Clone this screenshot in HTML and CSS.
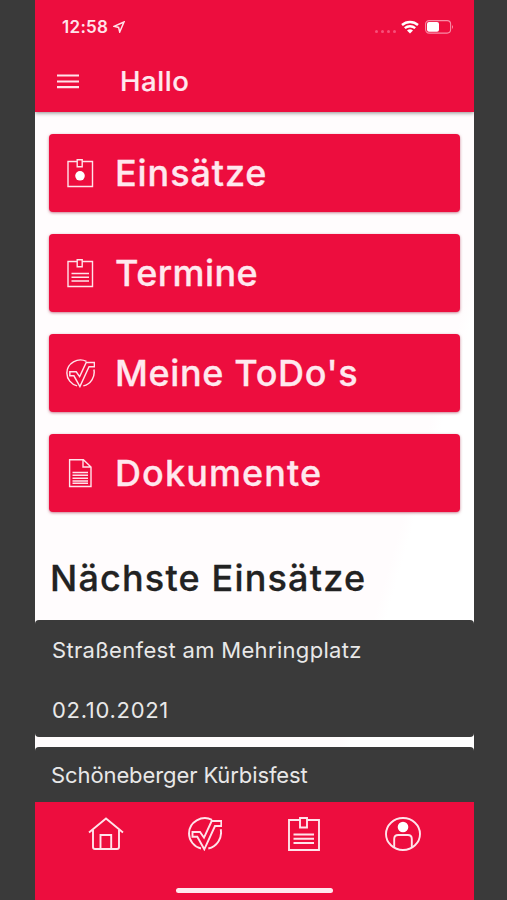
FILE: index.html
```html
<!DOCTYPE html>
<html lang="de">
<head>
<meta charset="utf-8">
<title>Hallo</title>
<link rel="stylesheet" href="styles.css">
</head>
<body>
<svg class="defs" width="0" height="0">
  <symbol id="clipboard" viewBox="0 0 32 34">
    <path d="M11.500 3H1v30h30V3H19.500M12 1h7v9.500h-7z"/>
    <path d="M5.500 17.500h20.500M5.500 21.700h20.500M5.500 26h20.500"/>
  </symbol>
  <symbol id="check" viewBox="0 0 34 34">
    <path d="M24 2.800C14-2.200 1 4.800 1 16.500 1 23.500 6 29.800 13 31.500M32.700 12.300C34.500 21 29 29.500 20.300 31.500"/>
    <path d="M4.500 15H12l4 5.700L23.700 4h9.600v5H27L16.300 32.300 9.300 19.700H4.500z"/>
  </symbol>
</svg>
<div class="phone">
  <header class="header">
    <div class="status">
      <span class="time">12:58</span>
      <svg class="locate" viewBox="0 0 12 12"><path d="M11 1 1 5.300l4.600 1.100L6.700 11z"/></svg>
      <span class="dots"><i></i><i></i><i></i><i></i></span>
      <svg class="wifi" viewBox="0 0 18 14"><path d="M1 5A12 12 0 0 1 17 5M3.800 8.200a8 8 0 0 1 10.400 0"/><path class="solid" d="M6 10.500a4.800 4.800 0 0 1 6 0L9 13.500z"/></svg>
      <svg class="battery" viewBox="0 0 29 14"><rect class="shell" x=".6" y=".6" width="25" height="12.500" rx="3.500"/><rect class="solid" x="2" y="2" width="12" height="9.800" rx="2"/><path class="solid tip" d="M27 5q2 1.700 0 4z"/></svg>
    </div>
    <div class="bar">
      <svg class="menu" viewBox="0 0 22 15"><path d="M0 1.500h22M0 7.500h22M0 13.200h22"/></svg>
      <h1>Hallo</h1>
    </div>
  </header>
  <main class="content">
    <nav class="actions">
      <a class="action"><svg class="icon" viewBox="0 0 27 29"><path d="M10 2.500H1v25h24.500v-25H15.500M10.200.700h5v7.100h-5z"/><circle class="solid" cx="13" cy="16.800" r="4.800"/></svg><span class="t1">Einsätze</span></a>
      <a class="action"><svg class="icon" viewBox="0 0 27 29"><path d="M10 2.500H1v25h24.500v-25H15.500M10.200.700h5v7.100h-5z"/><path d="M4.500 14.500H22M4.500 18.300H22M4.500 22H22"/></svg><span class="t2">Termine</span></a>
      <a class="action"><svg class="icon round"><use href="#check"/></svg><span class="t3">Meine ToDo's</span></a>
      <a class="action"><svg class="icon" viewBox="0 0 27 29"><path d="M2.600.700h13.800L24 8v19.500H2.600zM16 .700V8h8"/><path d="M5.500 13.500H21M5.500 16.300H21M5.500 19.200H21M5.500 22H21M5.500 24.300H21"/></svg><span class="t4">Dokumente</span></a>
    </nav>
    <h2>Nächste Einsätze</h2>
    <section class="cards">
      <article class="card"><p class="c1">Straßenfest am Mehringplatz</p><p class="c2">02.10.2021</p></article>
      <article class="card"><p class="c3">Schöneberger Kürbisfest</p></article>
    </section>
  </main>
  <footer class="footer">
    <nav class="tabs">
      <svg viewBox="0 0 36 34"><path d="M1 15.500 18 1.500l17 14M5 13v17q0 2 2 2h22q2 0 2-2V13M12.500 32V18h10.700v14"/></svg>
      <svg class="todo"><use href="#check"/></svg>
      <svg><use href="#clipboard"/></svg>
      <svg viewBox="0 0 36 34"><ellipse cx="18" cy="17" rx="17" ry="16"/><circle class="solid" cx="18" cy="10" r="5.300"/><path d="M9.200 30.500V22q0-4 4-4h9.600q4 0 4 4v8.500"/></svg>
    </nav>
    <div class="home"></div>
  </footer>
</div>
</body>
</html>
```
FILE: styles.css
```css
* { box-sizing: border-box; }
body {
  margin: 0;
  background: #3a3a3a;
  font-family: Inter, "Liberation Sans", sans-serif;
}
h1, h2, p { margin: 0; white-space: nowrap; }
svg { display: block; flex: none; fill: none; stroke: #ffe3ea; stroke-width: 1.5; }
.defs { position: absolute; }
.solid { fill: #fff; stroke: none; }
.phone {
  display: flex;
  flex-direction: column;
  width: 439px;
  height: 900px;
  margin-left: 35px;
  overflow: hidden;
  background: #fffcfd;
}
.header {
  flex: none;
  height: 112px;
  background: #ed0d3e;
  box-shadow: 0 1px 4px rgba(0, 0, 0, .45);
  z-index: 1;
}
.status { display: flex; align-items: center; height: 54px; padding-left: 27px; }
.time { width: 47px; color: #ffe3ea; font-size: 17px; font-weight: 600; letter-spacing: .3px; line-height: 54px; }
.locate { width: 12px; height: 12px; margin-left: 4px; }
.dots { display: flex; gap: 3px; margin: 9px 5px 0 250px; }
.dots i { width: 3px; height: 3px; border-radius: 50%; background: #f7507a; }
.wifi { width: 18px; height: 14px; stroke: #fff; stroke-width: 2.4; }
.battery { width: 29px; height: 14px; margin-left: 6px; }
.shell { stroke: #f98ba5; stroke-width: 1.1; }
.tip { fill: #f98ba5; }
.bar { display: flex; align-items: center; height: 54px; padding-left: 22px; }
.menu { width: 22px; height: 15px; stroke-width: 2.2; }
h1 { margin-left: 41px; color: #ffe8ee; font-size: 27.5px; font-weight: 500; letter-spacing: .6px; line-height: 55px; -webkit-text-stroke: .2px; }
.content {
  flex: 1;
  min-height: 0;
  overflow: hidden;
  padding-top: 22px;
  background: linear-gradient(106deg, #fffcfd 0 76%, #fff 78%);
}
.actions { display: grid; gap: 22px; padding: 0 14px; }
.action {
  display: flex;
  align-items: center;
  height: 78px;
  padding-left: 18px;
  border-radius: 4px;
  background: #ed0d3e;
  box-shadow: 0 1px 3px rgba(150, 0, 40, .5);
  color: #ffe8ee;
  font-size: 36px;
  font-weight: 500;
  line-height: 79px;
  white-space: nowrap;
  -webkit-text-stroke: .3px;
}
.icon { width: 27px; height: 29px; margin-right: 21px; stroke-width: 1.4; }
.round { width: 29px; margin: 0 20px 0 -1px; stroke-width: 1.7; }
.t1 { letter-spacing: .9px; }
.t2 { letter-spacing: .45px; }
.t3 { letter-spacing: .65px; }
.t4 { letter-spacing: 1.1px; }
h2 { height: 108px; padding: 44px 0 0 15px; color: #222; font-size: 36px; font-weight: 500; letter-spacing: 1.18px; line-height: 44px; -webkit-text-stroke: .3px; }
.cards { display: grid; gap: 10px; }
.card {
  height: 117px;
  padding: 0 17px;
  border-radius: 4px;
  background: #3a3a3a;
  color: #e8e8e8;
  font-size: 22px;
  line-height: 60px;
}
.c1 { letter-spacing: .32px; }
.c2 { letter-spacing: .7px; }
.c3 { margin-left: -1px; letter-spacing: -.1px; line-height: 57px; }
.footer { flex: none; height: 98px; background: #ed0d3e; }
.tabs { display: grid; grid-template-columns: repeat(4, 99px); justify-content: center; justify-items: center; padding-top: 15px; }
.tabs svg { width: 36px; height: 34px; stroke-width: 1.9; }
.tabs .todo { width: 34px; }
.home { width: 157px; height: 5px; margin: 37px auto 0; border-radius: 3px; background: #ffe8ee; }
```
